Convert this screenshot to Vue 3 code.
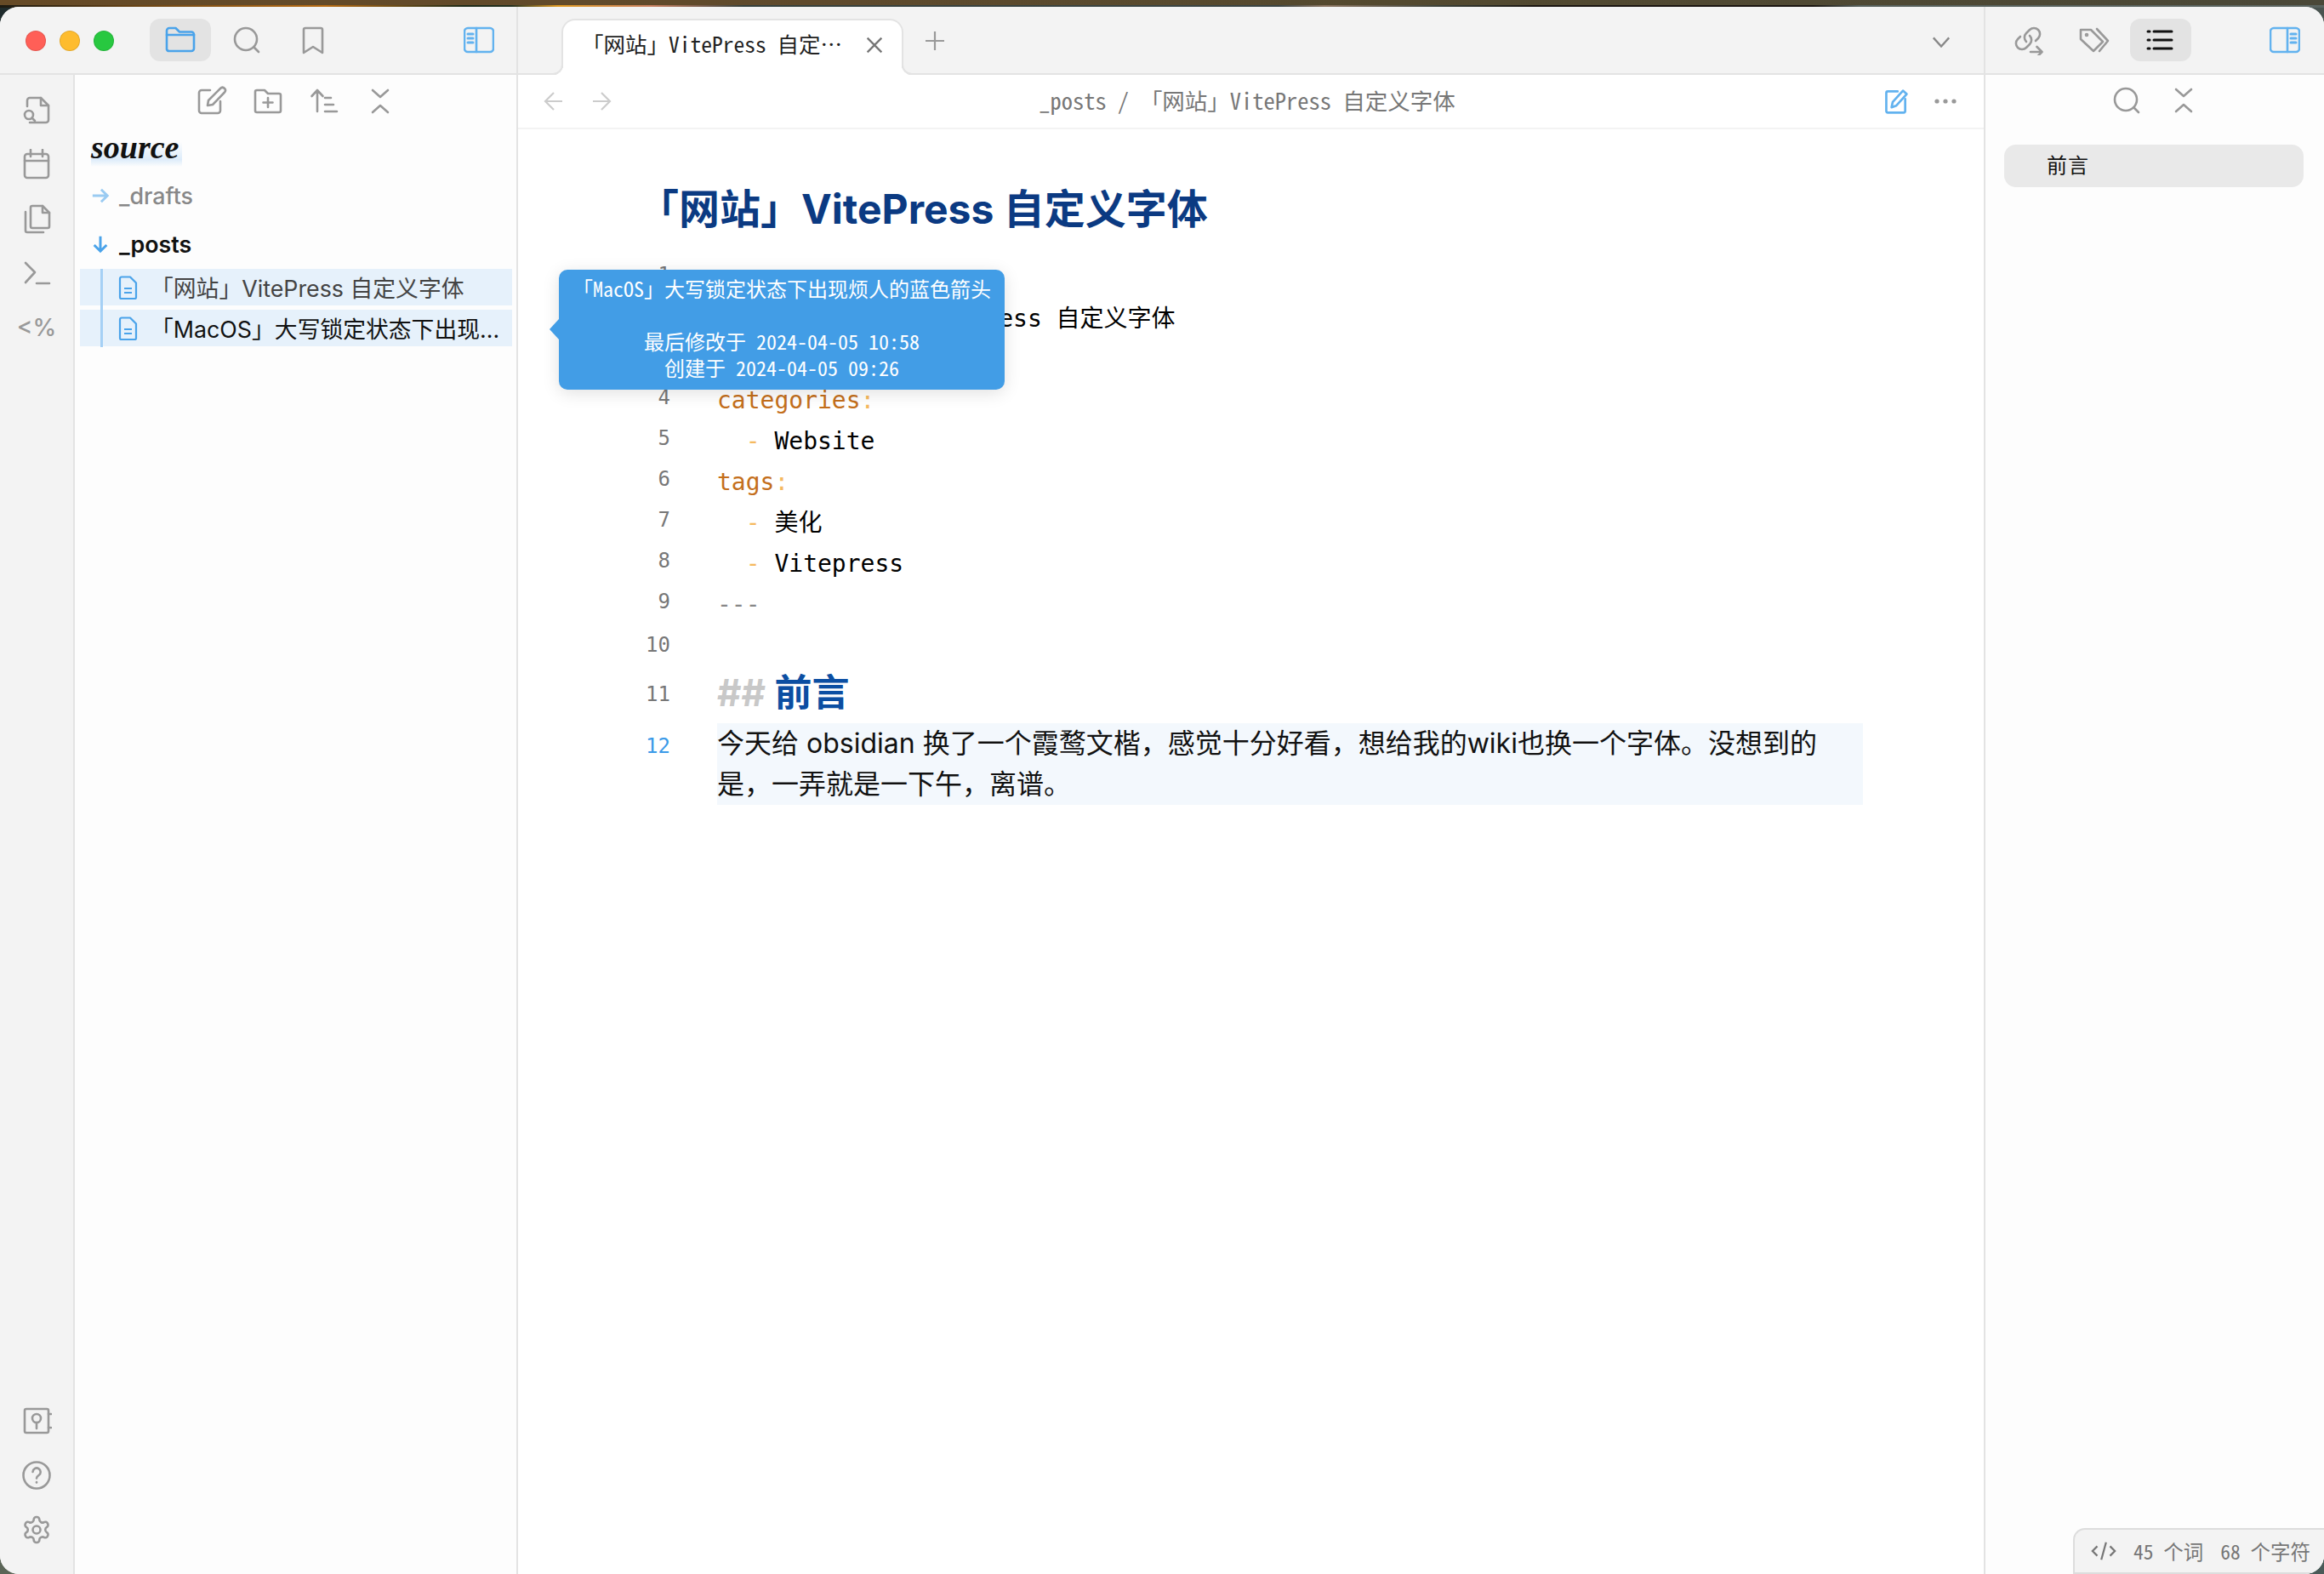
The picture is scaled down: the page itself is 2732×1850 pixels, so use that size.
<template>
  <div class="desktop">
    <div class="window">
      <header class="titlebar">
        <div class="head-left">
          <div class="lights">
            <span class="light red"></span>
            <span class="light yellow"></span>
            <span class="light green"></span>
          </div>
          <div class="tool-btn active first">
            <svg class="ico blue" viewBox="0 0 36 36"><path d="M2 29V7a3 3 0 0 1 3-3h7.500l4.500 4.500h14a3 3 0 0 1 3 3V28a3 3 0 0 1-3 3H5a3 3 0 0 1-3-2z" /><path d="M2 12h32" /></svg>
          </div>
          <div class="tool-btn">
            <svg class="ico" viewBox="0 0 36 36"><circle cx="17" cy="17" r="13" /><path d="M26.500 26.500L32 32" /></svg>
          </div>
          <div class="tool-btn">
            <svg class="ico" viewBox="0 0 36 36"><path d="M7 33V6a2 2 0 0 1 2-2h18a2 2 0 0 1 2 2v27l-11-7z" /></svg>
          </div>
          <div class="tool-btn push">
            <svg class="ico lightblue" viewBox="0 0 36 36"><rect x="1" y="4" width="34" height="28" rx="4" /><path d="M15 4v28" /><path class="bars" d="M5 11h6M5 16h6M5 21h6" /></svg>
          </div>
        </div>

        <div class="tabs">
          <div class="tab">
            <span class="tab-title">「网站」VitePress 自定…</span>
            <svg class="tab-close" viewBox="0 0 24 24"><path d="M2 2l20 20M22 2L2 22" /></svg>
          </div>
          <svg class="tab-plus" viewBox="0 0 24 24"><path d="M12 1v22M1 12h22" /></svg>
          <svg class="tab-more" viewBox="0 0 24 24"><path d="M2 7l10 11L22 7" /></svg>
        </div>

        <div class="head-right">
          <div class="tool-btn">
            <svg class="ico" viewBox="0 0 36 36"><path d="M16 20a7 7 0 0 1 0-10l4-4a7 7 0 0 1 10 10l-3 3" /><path d="M20 13a7 7 0 0 1 0 10l-4 4A7 7 0 0 1 6 17l3-3" /><path d="M21 32h13M28.500 26l6 6-6 6" /></svg>
          </div>
          <div class="tool-btn">
            <svg class="ico" viewBox="0 0 36 36"><path d="M2 6h12l14 14-11 11L2 17z" stroke-linejoin="round" /><circle cx="9" cy="12" r="1" /><path d="M21 5l13 14-10 12" /></svg>
          </div>
          <div class="tool-btn active">
            <svg class="ico dark" viewBox="0 0 36 36"><path class="thick" d="M10 8h21M10 18h21M10 28h21" /><path class="thick" d="M3 8h2M3 18h2M3 28h2" /></svg>
          </div>
          <div class="tool-btn push">
            <svg class="ico lightblue" viewBox="0 0 36 36"><rect x="1" y="4" width="34" height="28" rx="4" /><path d="M21 4v28" /><path class="bars" d="M25 11h6M25 16h6M25 21h6" /></svg>
          </div>
        </div>
      </header>

      <div class="body">
        <aside class="ribbon">
          <svg class="ico" viewBox="0 0 36 36"><path d="M7 14V7a3 3 0 0 1 3-3h13l9 9v17a3 3 0 0 1-3 3H10" /><path d="M23 4v9h9" /><circle cx="9" cy="24" r="5" /><path d="M12.500 27.500L16 31" /></svg>
          <svg class="ico" viewBox="0 0 36 36"><rect x="4" y="6" width="28" height="28" rx="3" /><path d="M4 14h28M11 1v8M25 1v8" /></svg>
          <svg class="ico" viewBox="0 0 36 36"><path d="M11 5a2 2 0 0 1 2-2h12l8 8v16a2 2 0 0 1-2 2H13a2 2 0 0 1-2-2z" /><path d="M25 3v8h8" /><path d="M5 10v22a2 2 0 0 0 2 2h19" /></svg>
          <svg class="ico" viewBox="0 0 36 36"><path d="M5 6l11 11L5 29M18 30h15" /></svg>
          <span class="ejs">&lt;%</span>
          <div class="ribbon-bottom">
            <svg class="ico" viewBox="0 0 36 36"><rect x="4" y="4" width="28" height="28" rx="2" /><circle cx="18" cy="15" r="5" /><path d="M18 20v7M32 10h3M32 26h3" /></svg>
            <svg class="ico" viewBox="0 0 36 36"><circle cx="18" cy="18" r="15.500" /><path d="M13.500 14a4.600 4.600 0 1 1 7 4c-1.500.9-2.500 1.800-2.500 3.500" /><path d="M18 26v.5" /></svg>
            <svg class="ico" viewBox="0 0 24 24"><path class="gear" d="M12.22 2h-.44a2 2 0 0 0-2 2v.18a2 2 0 0 1-1 1.730l-.43.25a2 2 0 0 1-2 0l-.15-.08a2 2 0 0 0-2.730.73l-.22.38a2 2 0 0 0 .73 2.730l.15.1a2 2 0 0 1 1 1.720v.51a2 2 0 0 1-1 1.740l-.15.09a2 2 0 0 0-.73 2.730l.22.38a2 2 0 0 0 2.730.73l.15-.08a2 2 0 0 1 2 0l.43.25a2 2 0 0 1 1 1.730V20a2 2 0 0 0 2 2h.44a2 2 0 0 0 2-2v-.18a2 2 0 0 1 1-1.730l.43-.25a2 2 0 0 1 2 0l.15.08a2 2 0 0 0 2.730-.73l.22-.39a2 2 0 0 0-.73-2.730l-.15-.08a2 2 0 0 1-1-1.740v-.5a2 2 0 0 1 1-1.740l.15-.09a2 2 0 0 0 .73-2.730l-.22-.38a2 2 0 0 0-2.730-.73l-.15.08a2 2 0 0 1-2 0l-.43-.25a2 2 0 0 1-1-1.730V4a2 2 0 0 0-2-2z" /><circle class="gear" cx="12" cy="12" r="3" /></svg>
          </div>
        </aside>

        <aside class="sidebar">
          <div class="side-tools">
            <svg class="ico" viewBox="0 0 36 36"><path d="M16 5H6a3 3 0 0 0-3 3v21a3 3 0 0 0 3 3h19a3 3 0 0 0 3-3V18" /><path d="M13 23l1-6L28 3c1.500-1.500 3.500-1.500 5 0s1 3.500-.5 5L19 22z" /></svg>
            <svg class="ico" viewBox="0 0 36 36"><path d="M3 29V7a2 2 0 0 1 2-2h9l4 4h13a2 2 0 0 1 2 2v18a2 2 0 0 1-2 2H5a2 2 0 0 1-2-2z" /><path d="M18 14v11M12.500 19.500h11" /></svg>
            <svg class="ico" viewBox="0 0 36 36"><path d="M10 30V5M3.500 12L10 5l6.500 7M19 14h7M19 22h10M19 30h14" /></svg>
            <svg class="ico" viewBox="0 0 36 36"><path d="M9 5l9 8 9-8M9 31l9-8 9 8" /></svg>
          </div>
          <div class="vault-name">source</div>
          <div class="folder closed">
            <svg class="arrow" viewBox="0 0 24 24"><path d="M2 12h19M13 4l8 8-8 8" /></svg>
            <span>_drafts</span>
          </div>
          <div class="folder open">
            <svg class="arrow" viewBox="0 0 24 24"><path d="M12 2v19M4 13l8 8 8-8" /></svg>
            <span>_posts</span>
          </div>
          <div class="files">
            <div v-for="file in files" :key="file.name" class="file" :class="{ current: file.current }">
              <svg class="file-ico" viewBox="0 0 24 28"><path d="M3 3.500A2 2 0 0 1 5 1.500h10l7 7v17a1.500 1.500 0 0 1-1.500 1.500H4.500A1.500 1.500 0 0 1 3 25.500z" /><path d="M8 15h9M8 20h9" /></svg>
              <span class="file-name">{{ file.name }}</span>
            </div>
          </div>
        </aside>

        <main class="main">
          <div class="view-header">
            <div class="nav">
              <svg class="nav-ico" viewBox="0 0 24 24"><path d="M22 12H3M12 2L2 12l10 10" /></svg>
              <svg class="nav-ico" viewBox="0 0 24 24"><path d="M2 12h19M12 2l10 10-10 10" /></svg>
            </div>
            <div class="crumbs">
              <span>_posts</span>
              <span>/</span>
              <span>「网站」VitePress 自定义字体</span>
            </div>
            <div class="view-actions">
              <svg class="ico lightblue edit" viewBox="0 0 36 36"><path d="M20 5H7a2 2 0 0 0-2 2v24a2 2 0 0 0 2 2h21a2 2 0 0 0 2-2V15" /><path d="M12 26l1.500-7L27 4l5 4.500L18 24z" /></svg>
              <svg class="more" viewBox="0 0 28 8"><circle cx="4" cy="4" r="2.600" /><circle cx="14" cy="4" r="2.600" /><circle cx="24" cy="4" r="2.600" /></svg>
            </div>
          </div>

          <div class="doc">
            <h1 class="inline-title">「网站」VitePress 自定义字体</h1>
            <div
              v-for="line in lines"
              :key="line.n"
              class="line"
              :class="line.cls"
            >
              <span class="gutter">{{ line.n }}</span>
              <span class="code"><span v-for="(part, i) in line.parts" :key="i" :class="part.c">{{ part.t }}</span></span>
            </div>
          </div>
        </main>

        <aside class="right">
          <div class="right-tools">
            <svg class="ico" viewBox="0 0 36 36"><circle cx="17" cy="17" r="13" /><path d="M26.500 26.500L32 32" /></svg>
            <svg class="ico" viewBox="0 0 36 36"><path d="M9 5l9 8 9-8M9 31l9-8 9 8" /></svg>
          </div>
          <div class="outline-item">前言</div>
        </aside>
      </div>

      <div class="status">
        <svg class="status-ico" viewBox="0 0 32 24"><path d="M8 6l-6 6 6 6M24 6l6 6-6 6M19 1l-6 22" /></svg>
        <span>45 个词</span>
        <span>68 个字符</span>
      </div>
    </div>

    <div class="tooltip">
      <div>「MacOS」大写锁定状态下出现烦人的蓝色箭头</div>
      <div>&nbsp;</div>
      <div>最后修改于 2024-04-05 10:58</div>
      <div>创建于 2024-04-05 09:26</div>
    </div>
  </div>
</template>

<script setup>
const files = [
  { name: '「网站」VitePress 自定义字体', current: true },
  { name: '「MacOS」大写锁定状态下出现烦人的蓝色箭头', current: false }
]

const lines = [
  { n: 1, parts: [{ t: '---', c: 'fence' }] },
  { n: 2, parts: [{ t: 'title', c: 'key' }, { t: ': ', c: 'colon' }, { t: '「网站」VitePress 自定义字体' }] },
  { n: 3, parts: [{ t: 'date', c: 'key' }, { t: ': ', c: 'colon' }, { t: '2024-04-05' }] },
  { n: 4, parts: [{ t: 'categories', c: 'key' }, { t: ':', c: 'colon' }] },
  { n: 5, parts: [{ t: '  - ', c: 'colon' }, { t: 'Website' }] },
  { n: 6, parts: [{ t: 'tags', c: 'key' }, { t: ':', c: 'colon' }] },
  { n: 7, parts: [{ t: '  - ', c: 'colon' }, { t: '美化' }] },
  { n: 8, parts: [{ t: '  - ', c: 'colon' }, { t: 'Vitepress' }] },
  { n: 9, parts: [{ t: '---', c: 'fence' }] },
  { n: 10, cls: 'low', parts: [{ t: ' ' }] },
  { n: 11, cls: 'heading low', parts: [{ t: '## ', c: 'hash' }, { t: '前言', c: 'h2' }] },
  {
    n: 12,
    cls: 'para low',
    parts: [{ t: '今天给 obsidian 换了一个霞鹜文楷，感觉十分好看，想给我的wiki也换一个字体。没想到的是，一弄就是一下午，离谱。' }]
  }
]
</script>

<style scoped>
.desktop {
  position: relative;
  width: 2732px;
  height: 1850px;
  padding-top: 8px;
  box-sizing: border-box;
  overflow: hidden;
  background:
    linear-gradient(90deg, #664a26, #5f4a2c 35%, #53492f 60%, #4a4838) no-repeat 0 0 / 100% 6px,
    linear-gradient(90deg, #1c1a12 0, #6a4414 6%, #b96c12 14%, #1c2a18 20%, #23301f 22%, #e09a20 24%, #c98060 28%, #35403c 32%, #3a4444 55%, #8a7460 57%, #3a4038 62%, #1a1510 66%, #1a1510 78%, #56605c 80%, #5a6460 100%) no-repeat 0 6px / 100% 3px,
    linear-gradient(90deg, #5b6557, #4a5a58) no-repeat 0 100% / 100% 30px,
    linear-gradient(90deg, #1f2b2c, #4a5450);
}

.window {
  position: relative;
  display: flex;
  flex-direction: column;
  height: 1842px;
  border-radius: 22px;
  overflow: hidden;
  background: #fff;
}

.titlebar {
  display: flex;
  flex: none;
  height: 80px;
  box-sizing: border-box;
  background: #f3f3f3;
  border-bottom: 2px solid #e3e3e3;
}

.head-left {
  display: flex;
  align-items: center;
  width: 609px;
  box-sizing: border-box;
  padding: 0 8px 0 30px;
  gap: 6px;
  border-right: 2px solid #e3e3e3;
}

.lights {
  display: flex;
  gap: 16px;
  margin-top: 2px;
}

.light {
  width: 24px;
  height: 24px;
  box-sizing: border-box;
  border-radius: 50%;
  border: 1px solid rgba(0, 0, 0, 0.1);
}

.red { background: #ff5f57; }
.yellow { background: #febc2e; }
.green { background: #28c840; }

.tool-btn {
  display: flex;
  align-items: center;
  justify-content: center;
  width: 72px;
  height: 50px;
  border-radius: 12px;
}

.tool-btn.active { background: #e3e3e3; }
.tool-btn.first { margin-left: 36px; }
.tool-btn.push { margin-left: auto; }

.ico {
  display: block;
  flex: none;
  width: 36px;
  height: 36px;
  fill: none;
  stroke: #999;
  stroke-width: 2.600;
  stroke-linecap: round;
  stroke-linejoin: round;
}

.ico.blue { stroke: #4aa3ea; }
.ico.lightblue { stroke: #62b2ef; }
.ico.dark { stroke: #111; }
.ico .bars { stroke-width: 3; }
.ico .thick { stroke-width: 3; }
.ico .gear { stroke-width: 1.750; }

.tabs {
  position: relative;
  display: flex;
  flex: 1;
  align-items: flex-end;
  padding-left: 51px;
}

.tab {
  position: relative;
  display: flex;
  align-items: center;
  justify-content: space-between;
  width: 402px;
  height: 66px;
  box-sizing: border-box;
  margin-bottom: -2px;
  padding: 0 22px 0 22px;
  background: #fff;
  border: 2px solid #e3e3e3;
  border-bottom: none;
  border-radius: 16px 16px 0 0;
}

.tab::before,
.tab::after {
  content: "";
  position: absolute;
  bottom: 0;
  width: 12px;
  height: 12px;
  box-sizing: content-box;
  border-bottom: 2px solid #e3e3e3;
}

.tab::before {
  left: -14px;
  border-right: 2px solid #e3e3e3;
  border-bottom-right-radius: 12px;
  box-shadow: 6px 6px 0 0 #fff;
}

.tab::after {
  right: -14px;
  border-left: 2px solid #e3e3e3;
  border-bottom-left-radius: 12px;
  box-shadow: -6px 6px 0 0 #fff;
}

.tab-title {
  font: 25.500px "Noto Sans Mono CJK SC", "Noto Sans CJK SC", monospace;
  color: #222;
  white-space: pre;
  margin-top: -12px;
}

.tab-close {
  width: 20px;
  height: 20px;
  margin-top: -6px;
  fill: none;
  stroke: #777;
  stroke-width: 2.800;
}

.tab-plus {
  width: 24px;
  height: 24px;
  margin: 0 0 26px 25px;
  fill: none;
  stroke: #999;
  stroke-width: 2.200;
}

.tab-more {
  position: absolute;
  left: 1662px;
  top: 30px;
  width: 22px;
  height: 22px;
  fill: none;
  stroke: #888;
  stroke-width: 2.600;
}

.head-right {
  display: flex;
  align-items: center;
  width: 400px;
  box-sizing: border-box;
  padding: 0 10px 0 14px;
  gap: 6px;
  border-left: 2px solid #e3e3e3;
}

.body {
  display: flex;
  flex: 1;
  min-height: 0;
}

.ribbon {
  display: flex;
  flex-direction: column;
  align-items: center;
  flex: none;
  width: 88px;
  box-sizing: border-box;
  padding: 23px 0 34px 0;
  gap: 28px;
  background: #f3f3f3;
  border-right: 2px solid #e3e3e3;
}

.ejs {
  font: 500 28px/36px Inter, sans-serif;
  color: #999;
}

.ribbon-bottom {
  display: flex;
  flex-direction: column;
  gap: 28px;
  margin-top: auto;
}

.sidebar {
  display: flex;
  flex-direction: column;
  flex: none;
  width: 521px;
  box-sizing: border-box;
  padding: 0 5px 0 6px;
  background: #fdfdfd;
  border-right: 2px solid #e3e3e3;
  font-family: Inter, "Noto Sans CJK SC", sans-serif;
  font-size: 26.800px;
}

.side-tools {
  display: flex;
  justify-content: center;
  align-items: center;
  gap: 30px;
  height: 62px;
}

.vault-name {
  align-self: flex-start;
  height: 42px;
  margin: 4px 0 10px 13px;
  padding: 0 4px 0 0;
  font: italic 700 38px/38px "Liberation Serif", serif;
  color: #111;
  background: linear-gradient(180deg, rgba(200, 225, 248, 0) 30%, rgba(200, 225, 248, 0.6) 80%, rgba(200, 225, 248, 0) 100%);
}

.folder {
  display: flex;
  align-items: center;
  height: 48px;
  margin-bottom: 9px;
  padding-left: 13px;
}

.folder .arrow {
  width: 22px;
  height: 22px;
  margin-right: 11px;
  fill: none;
  stroke-width: 3.200;
}

.folder.closed {
  color: #888;
  font-weight: 500;
}

.folder.closed .arrow { stroke: #9acbf2; }

.folder.open {
  color: #111;
  font-weight: 600;
  margin-bottom: 5px;
}

.folder.open .arrow { stroke: #4aa3ea; }

.files {
  display: flex;
  flex-direction: column;
  gap: 5px;
}

.files::before {
  content: "";
  position: absolute;
  left: 118px;
  top: 308px;
  width: 3px;
  height: 92px;
  background: #a5d0f5;
  z-index: 1;
}

.file {
  display: flex;
  align-items: center;
  height: 43px;
  padding-left: 44px;
  background: #e6f1fb;
  color: #111;
}

.file.current { color: #444; }

.file-ico {
  flex: none;
  width: 24px;
  height: 28px;
  margin-right: 15px;
  fill: none;
  stroke: #4aa3ea;
  stroke-width: 2.200;
  stroke-linejoin: round;
}

.file-name {
  overflow: hidden;
  white-space: nowrap;
  text-overflow: ellipsis;
  margin-right: 6px;
}

.main {
  flex: 1;
  min-width: 0;
  background: #fff;
}

.view-header {
  display: flex;
  align-items: center;
  justify-content: space-between;
  height: 62px;
  padding: 0 31px 0 30px;
  border-bottom: 2px solid #f3f3f3;
}

.nav {
  display: flex;
  gap: 32px;
}

.nav-ico {
  width: 24px;
  height: 24px;
  fill: none;
  stroke: #ccc;
  stroke-width: 2.200;
}

.crumbs {
  display: flex;
  gap: 13px;
  margin-top: -4px;
  font: 26.500px "Noto Sans Mono CJK SC", "Noto Sans CJK SC", monospace;
  color: #777;
}

.view-actions {
  display: flex;
  align-items: center;
  gap: 28px;
}

.ico.edit {
  width: 32px;
  height: 32px;
  stroke-width: 3;
}

.more {
  width: 28px;
  height: 8px;
  fill: #999;
}

.doc {
  padding: 64px 142px 0 99px;
}

.inline-title {
  height: 60px;
  margin: 0 0 23px 42px;
  font: 700 48px/60px Inter, "Noto Sans CJK SC", sans-serif;
  color: #0b3a82;
  white-space: pre;
}

.line {
  display: flex;
  height: 48px;
  font: 28px/48px "DejaVu Sans Mono", "Noto Sans CJK SC", monospace;
  color: #000;
}

.gutter {
  flex: none;
  width: 80px;
  margin-right: 55px;
  text-align: right;
  font-size: 24px;
  color: #777;
}

.line.low .gutter {
  padding-top: 3px;
}

.code {
  flex: 1;
  min-width: 0;
  padding-top: 4px;
  white-space: pre-wrap;
}

.key { color: #c46f1c; }
.colon { color: #f5b95f; }
.fence { color: #888; }

.line.heading {
  height: 71px;
  align-items: center;
}

.line.heading .code {
  padding-top: 0;
  font: 700 44px/71px Inter, "Noto Sans CJK SC", sans-serif;
}

.hash { color: #c8c8c8; }
.h2 { color: #0b4ea2; }

.line.para {
  height: auto;
}

.line.para .gutter { color: #3b9ae8; }

.line.para .code {
  padding-top: 0;
  background: #f3f8fd;
  font: 32px/48px Inter, "Noto Sans CJK SC", sans-serif;
  color: #111;
}

.right {
  flex: none;
  width: 400px;
  box-sizing: border-box;
  background: #fdfdfd;
  border-left: 2px solid #e3e3e3;
}

.right-tools {
  display: flex;
  justify-content: center;
  gap: 31px;
  align-items: center;
  height: 60px;
}

.outline-item {
  height: 50px;
  margin: 22px 24px 0 22px;
  padding-left: 50px;
  border-radius: 14px;
  background: #e9e9e9;
  font: 24px/46px "Noto Sans Mono CJK SC", "Noto Sans CJK SC", monospace;
  color: #111;
  letter-spacing: 1px;
}

.status {
  position: absolute;
  right: 0;
  bottom: 0;
  display: flex;
  align-items: center;
  gap: 20px;
  width: 295px;
  height: 54px;
  box-sizing: border-box;
  padding-left: 19px;
  background: #f3f3f3;
  border: 2px solid #ddd;
  border-right: none;
  border-radius: 14px 0 0 0;
  font: 23.500px "Noto Sans Mono CJK SC", "Noto Sans CJK SC", monospace;
  color: #777;
}

.status-ico {
  width: 30px;
  height: 24px;
  fill: none;
  stroke: #777;
  stroke-width: 2.400;
}

.tooltip {
  position: absolute;
  left: 657px;
  top: 317px;
  width: 524px;
  height: 141px;
  box-sizing: border-box;
  padding-top: 6px;
  border-radius: 10px;
  background: #429de6;
  box-shadow: 0 4px 20px rgba(0, 0, 0, 0.12);
  font: 24px/31px "Noto Sans Mono CJK SC", "Noto Sans CJK SC", monospace;
  color: #fff;
  text-align: center;
  white-space: pre;
}

.tooltip::before {
  content: "";
  position: absolute;
  left: -11px;
  top: 58px;
  border: 12px solid transparent;
  border-left: none;
  border-right: 11px solid #429de6;
}
</style>
